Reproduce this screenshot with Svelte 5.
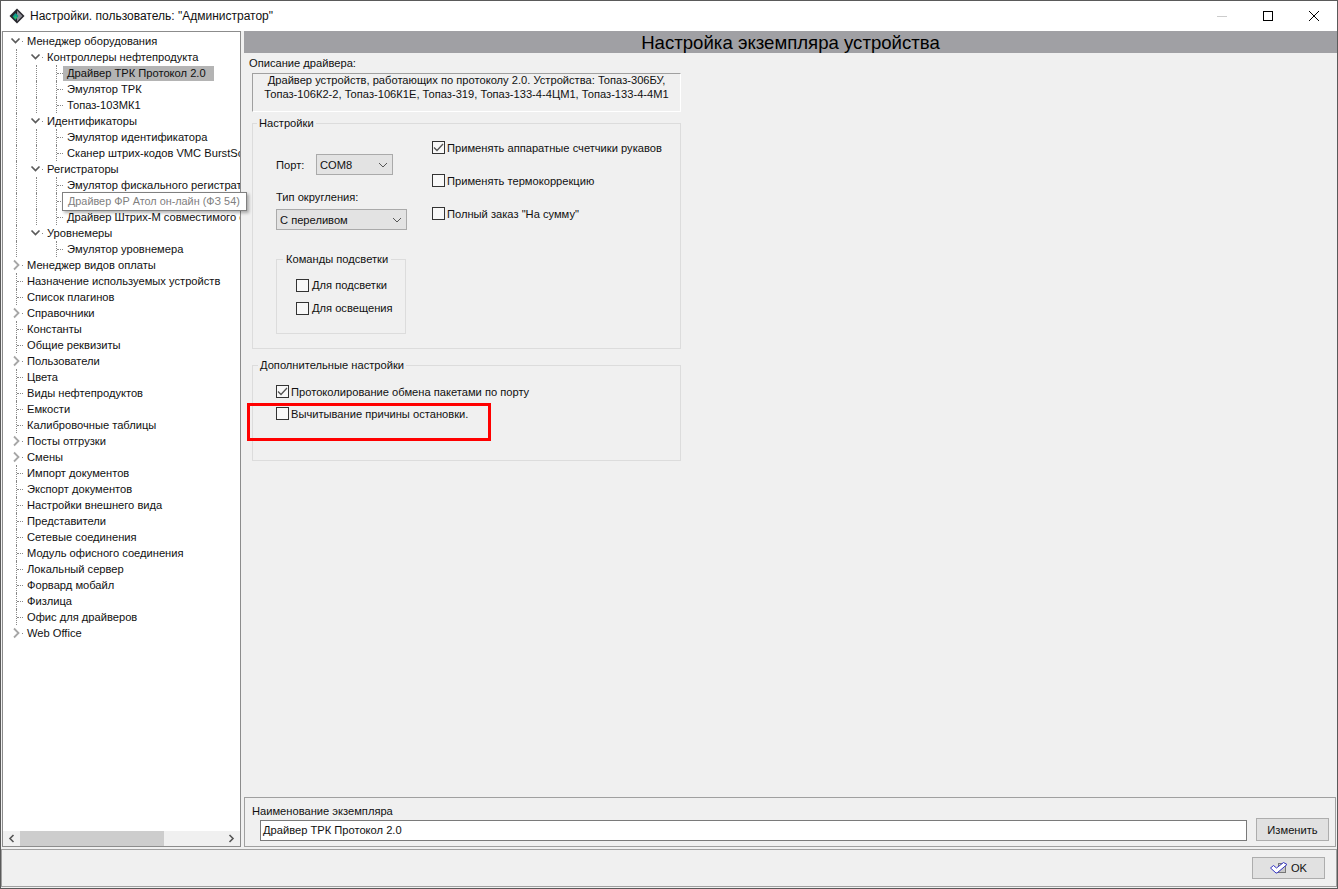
<script>
	const tree = [
		{ t: "Менеджер оборудования", l: 0, open: true, lines: [16] },
		{ t: "Контроллеры нефтепродукта", l: 1, open: true, lines: [16, 36] },
		{ t: "Драйвер ТРК Протокол 2.0", l: 2, sel: true, lines: [16, 36, 56] },
		{ t: "Эмулятор ТРК", l: 2, lines: [16, 36, 56] },
		{ t: "Топаз-103МК1", l: 2, lines: [16, 36, 56] },
		{ t: "Идентификаторы", l: 1, open: true, lines: [16, 36] },
		{ t: "Эмулятор идентификатора", l: 2, lines: [16, 36, 56] },
		{ t: "Сканер штрих-кодов VMC BurstScanner", l: 2, lines: [16, 36, 56] },
		{ t: "Регистраторы", l: 1, open: true, lines: [16, 36] },
		{ t: "Эмулятор фискального регистратора", l: 2, lines: [16, 36, 56] },
		{ t: "Драйвер ФР Атол он-лайн (ФЗ 54)", l: 2, under: true, lines: [16, 36, 56] },
		{ t: "Драйвер Штрих-М совместимого с", l: 2, lines: [16, 36, 56] },
		{ t: "Уровнемеры", l: 1, open: true, lines: [16] },
		{ t: "Эмулятор уровнемера", l: 2, lines: [16, 56] },
		{ t: "Менеджер видов оплаты", l: 0, closed: true, lines: [16] },
		{ t: "Назначение используемых устройств", l: 0, lines: [16] },
		{ t: "Список плагинов", l: 0, lines: [16] },
		{ t: "Справочники", l: 0, closed: true, lines: [16] },
		{ t: "Константы", l: 0, lines: [16] },
		{ t: "Общие реквизиты", l: 0, lines: [16] },
		{ t: "Пользователи", l: 0, closed: true, lines: [16] },
		{ t: "Цвета", l: 0, lines: [16] },
		{ t: "Виды нефтепродуктов", l: 0, lines: [16] },
		{ t: "Емкости", l: 0, lines: [16] },
		{ t: "Калибровочные таблицы", l: 0, lines: [16] },
		{ t: "Посты отгрузки", l: 0, closed: true, lines: [16] },
		{ t: "Смены", l: 0, closed: true, lines: [16] },
		{ t: "Импорт документов", l: 0, lines: [16] },
		{ t: "Экспорт документов", l: 0, lines: [16] },
		{ t: "Настройки внешнего вида", l: 0, lines: [16] },
		{ t: "Представители", l: 0, lines: [16] },
		{ t: "Сетевые соединения", l: 0, lines: [16] },
		{ t: "Модуль офисного соединения", l: 0, lines: [16] },
		{ t: "Локальный сервер", l: 0, lines: [16] },
		{ t: "Форвард мобайл", l: 0, lines: [16] },
		{ t: "Физлица", l: 0, lines: [16] },
		{ t: "Офис для драйверов", l: 0, lines: [16] },
		{ t: "Web Office", l: 0, closed: true, lines: [16], end: true }
	]
</script>

<div class="window">
	<div class="titlebar">
		<svg class="appicon" width="16" height="16" viewBox="0 0 16 16">
			<path d="M8 .5 15.5 8 8 15.5 .5 8Z" fill="#26262c" />
			<path d="M8 2.5 13.5 8 8 13.5Z" fill="#8d8d95" />
			<path d="M6.5 5 9.5 8 6.5 12 3.5 8.5Z" fill="#0f9c8c" />
			<path d="M6.5 8 8 9.5 6.5 11 5 9.5Z" fill="#35c15a" />
		</svg>
		<span class="title">Настройки. пользователь: "Администратор"</span>
		<div class="controls">
			<svg width="46" height="30" viewBox="0 0 46 30"><path d="M18 15.5H28" stroke="#ccc" fill="none" /></svg>
			<svg width="46" height="30" viewBox="0 0 46 30"><rect x="18.5" y="10.5" width="9" height="9" stroke="#000" fill="none" /></svg>
			<svg width="46" height="30" viewBox="0 0 46 30"><path d="M18 10 28 20M28 10 18 20" stroke="#000" fill="none" /></svg>
		</div>
	</div>

	<div class="main">
		<div class="treepanel">
			<div class="tree">
				{#each tree as n}
					<div class="row" class:end={n.end}>
						{#each n.lines as x}
							<i class="vline" style="left:{x - 3}px"></i>
						{/each}
						<i class="hline" style="left:{n.l * 20 + 14}px"></i>
						{#if n.open}
							<svg class="exp" style="left:{n.l * 20 + 7}px" width="11" height="16" viewBox="0 0 11 16"><path d="M1.5 5.5 5.5 9.5 9.5 5.5" stroke="#5a5a5a" stroke-width="1.7" fill="none" /></svg>
						{:else if n.closed}
							<svg class="exp" style="left:{n.l * 20 + 7}px" width="11" height="16" viewBox="0 0 11 16"><path d="M4 3.5 8.5 8 4 12.5" stroke="#a6a6a6" stroke-width="1.8" fill="none" /></svg>
						{/if}
						<span class="label" class:sel={n.sel} class:under={n.under} style="margin-left:{n.l * 20 + 20}px">{n.t}</span>
					</div>
				{/each}
			</div>
			<div class="hscroll">
				<svg width="17" height="15" viewBox="0 0 17 15"><path d="M10.5 4 7 7.5 10.5 11" stroke="#555" stroke-width="1.6" fill="none" /></svg>
				<div class="track"><div class="thumb"></div></div>
				<svg width="17" height="15" viewBox="0 0 17 15"><path d="M6.5 4 10 7.5 6.5 11" stroke="#555" stroke-width="1.6" fill="none" /></svg>
			</div>
		</div>

		<div class="content">
			<div class="heading">Настройка экземпляра устройства</div>
			<div class="form">
				<div class="desclabel">Описание драйвера:</div>
				<div class="desc"><div class="desctext">Драйвер устройств, работающих по протоколу 2.0. Устройства: Топаз-306БУ,<br />Топаз-106К2-2, Топаз-106К1Е, Топаз-319, Топаз-133-4-4ЦМ1, Топаз-133-4-4М1</div></div>

				<fieldset class="settings">
					<legend>Настройки</legend>
					<div class="leftcol">
						<div class="portrow">
							<span class="portlabel">Порт:</span>
							<div class="combo port">COM8<svg width="10" height="6" viewBox="0 0 10 6"><path d="M1 1 5 5 9 1" stroke="#555" fill="none" /></svg></div>
						</div>
						<div class="roundlabel">Тип округления:</div>
						<div class="combo round">С переливом<svg width="10" height="6" viewBox="0 0 10 6"><path d="M1 1 5 5 9 1" stroke="#555" fill="none" /></svg></div>
						<fieldset class="commands">
							<legend>Команды подсветки</legend>
							<label class="check"><span class="box"></span>Для подсветки</label>
							<label class="check"><span class="box"></span>Для освещения</label>
						</fieldset>
					</div>
					<div class="rightcol">
						<label class="check"><span class="box"><svg width="11" height="11" viewBox="0 0 11 11"><path d="M1 5.5 4 8.5 10 2" stroke="#555" stroke-width="1.3" fill="none" /></svg></span>Применять аппаратные счетчики рукавов</label>
						<label class="check"><span class="box"></span>Применять термокоррекцию</label>
						<label class="check"><span class="box"></span>Полный заказ "На сумму"</label>
					</div>
				</fieldset>

				<fieldset class="extra">
					<legend>Дополнительные настройки</legend>
					<label class="check"><span class="box"><svg width="11" height="11" viewBox="0 0 11 11"><path d="M1 5.5 4 8.5 10 2" stroke="#555" stroke-width="1.3" fill="none" /></svg></span>Протоколирование обмена пакетами по порту</label>
					<label class="check"><span class="box"></span>Вычитывание причины остановки.</label>
				</fieldset>
			</div>

			<div class="namebox">
				<div class="namelabel">Наименование экземпляра</div>
				<div class="namerow">
					<div class="nameinput">Драйвер ТРК Протокол 2.0</div>
					<div class="btn change">Изменить</div>
				</div>
			</div>
		</div>
	</div>

	<div class="footer">
		<div class="btn ok">
			<svg width="18" height="12" viewBox="0 0 18 12">
				<rect x="8.5" y="1.5" width="7" height="9" fill="#c8c8c8" stroke="#777" />
				<path d="M.5 6 3.5 3.5 6.5 6 13.5 .5 17 2.5 7 11 6 11Z" fill="#fff" stroke="#3434c4" />
			</svg>
			OK
		</div>
	</div>

	<div class="tooltip">Драйвер ФР Атол он-лайн (ФЗ 54)</div>
	<div class="redmark"></div>
</div>

<style>
	:global(body) {
		background: #f0f0f0;
	}
	.window {
		position: relative;
		box-sizing: border-box;
		width: 1338px;
		height: 889px;
		display: flex;
		flex-direction: column;
		background: #f0f0f0;
		border: 1px solid #5a5a5a;
		font: 11.15px "Liberation Sans", Arial, sans-serif;
		color: #111;
		overflow: hidden;
	}
	.titlebar {
		flex: none;
		height: 30px;
		display: flex;
		align-items: center;
		background: #fff;
		font-size: 12px;
	}
	.appicon {
		margin-left: 8px;
		margin-right: 5px;
	}
	.controls {
		margin-left: auto;
		display: flex;
	}
	.main {
		flex: none;
		height: 816px;
		display: flex;
	}
	.treepanel {
		box-sizing: border-box;
		width: 239px;
		margin-left: 1px;
		display: flex;
		flex-direction: column;
		background: #fff;
		border: 1px solid #8c8c8c;
	}
	.tree {
		flex: 1;
		overflow: hidden;
		padding-top: 1px;
	}
	.row {
		position: relative;
		height: 16px;
		line-height: 16px;
		white-space: nowrap;
	}
	.vline {
		position: absolute;
		top: 0;
		bottom: 0;
		border-left: 1px dotted #888;
	}
	.row:first-child .vline:first-child {
		top: 8px;
	}
	.row.end .vline {
		bottom: 8px;
	}
	.hline {
		position: absolute;
		top: 8px;
		width: 6px;
		border-top: 1px dotted #888;
	}
	.exp {
		position: absolute;
		top: 0;
		background: #fff;
	}
	.label {
		position: relative;
		display: inline-block;
		padding: 0 4px;
		background: #fff;
	}
	.label.sel {
		padding-right: 8px;
		background: linear-gradient(#fff 1px, #b4b4b4 1px);
	}
	.label.under {
		visibility: hidden;
	}
	.hscroll {
		flex: none;
		height: 15px;
		display: flex;
		background: #f0f0f0;
	}
	.track {
		flex: 1;
	}
	.thumb {
		width: 144px;
		height: 15px;
		background: #cdcdcd;
	}
	.content {
		flex: 1;
		display: flex;
		flex-direction: column;
		margin-left: 3px;
		min-width: 0;
	}
	.heading {
		flex: none;
		height: 22px;
		line-height: 23px;
		background: #a0a0a4;
		text-align: center;
		font-size: 18.6px;
		color: #000;
	}
	.form {
		flex: 1;
		width: 429px;
		padding-left: 8px;
	}
	.desclabel {
		margin: 3px 0 3px -3px;
		line-height: 14px;
	}
	.desc {
		box-sizing: border-box;
		height: 39px;
		line-height: 14px;
		text-align: center;
		border: 1px solid;
		border-color: #a0a0a0 #fff #fff #a0a0a0;
	}
	.desctext {
		margin-top: -1px;
	}
	fieldset {
		margin: 0;
		border: 1px solid #dcdcdc;
	}
	legend {
		padding: 0 2px;
		line-height: 14px;
	}
	.settings {
		box-sizing: border-box;
		height: 233px;
		margin-top: 4px;
		padding: 0;
		display: flex;
	}
	.settings > legend {
		margin-left: 4px;
	}
	.leftcol {
		width: 156px;
		margin-left: 23px;
		flex: none;
	}
	.portrow {
		display: flex;
		align-items: center;
		margin-top: 24px;
	}
	.portlabel {
		width: 40px;
	}
	.combo {
		box-sizing: border-box;
		display: flex;
		align-items: center;
		justify-content: space-between;
		height: 21px;
		padding: 0 4px 0 3px;
		background: #e3e3e3;
		border: 1px solid #aaa;
	}
	.port {
		width: 77px;
	}
	.roundlabel {
		margin-top: 15px;
		line-height: 14px;
	}
	.round {
		width: 131px;
		margin-top: 5px;
	}
	.commands {
		box-sizing: border-box;
		width: 130px;
		height: 82px;
		margin-top: 22px;
		padding: 0 0 0 19px;
	}
	.commands > legend {
		margin-left: -13px;
		padding: 0 3px;
	}
	.commands .check {
		margin-top: 5px;
		height: 18px;
		margin-bottom: 5px;
	}
	.commands .check:first-of-type {
		margin-top: 10px;
	}
	.commands .box {
		margin-right: 3px;
	}
	.rightcol {
		margin-top: 11px;
		display: flex;
		flex-direction: column;
		gap: 20px;
	}
	.check {
		display: flex;
		align-items: center;
		height: 13px;
		white-space: nowrap;
	}
	.box {
		box-sizing: border-box;
		flex: none;
		display: flex;
		align-items: center;
		justify-content: center;
		width: 13px;
		height: 13px;
		margin-right: 2px;
		background: #f8f8f8;
		border: 1px solid #333;
	}
	.extra {
		box-sizing: border-box;
		height: 103px;
		margin-top: 9px;
		padding: 13px 0 0 23px;
	}
	.extra > legend {
		margin-left: -18px;
	}
	.extra .check {
		margin-bottom: 9px;
	}
	.namebox {
		flex: none;
		box-sizing: border-box;
		height: 50px;
		margin: 0 1px 0 0;
		padding: 6px 6px 0 7px;
		border: 1px solid #a0a0a0;
	}
	.namelabel {
		line-height: 14px;
	}
	.namerow {
		display: flex;
		align-items: flex-start;
		padding-left: 8px;
	}
	.nameinput {
		box-sizing: border-box;
		flex: 1;
		height: 21px;
		line-height: 19px;
		padding-left: 2px;
		background: #fff;
		border: 1px solid #7a7a7a;
		margin-top: 2px;
	}
	.btn {
		box-sizing: border-box;
		display: flex;
		align-items: center;
		justify-content: center;
		background: #e1e1e1;
		border: 1px solid #adadad;
	}
	.change {
		width: 73px;
		height: 23px;
		margin-left: 9px;
	}
	.footer {
		flex: none;
		box-sizing: border-box;
		height: 38px;
		margin: 2px 0 0 0;
		display: flex;
		justify-content: flex-end;
		align-items: center;
		padding-right: 11px;
		border: 1px solid #a0a0a0;
	}
	.ok {
		width: 73px;
		height: 22px;
		gap: 3px;
	}
	.tooltip {
		position: absolute;
		left: 61px;
		top: 191px;
		box-sizing: border-box;
		width: 185px;
		height: 19px;
		padding-left: 5px;
		line-height: 17px;
		font-size: 10.85px;
		background: #fff;
		color: #808080;
		border: 1px solid #808080;
		box-shadow: 2px 2px 3px rgba(0, 0, 0, 0.3);
	}
	.redmark {
		position: absolute;
		left: 246px;
		top: 402px;
		box-sizing: border-box;
		width: 244px;
		height: 38px;
		border: 3px solid #f00;
	}
</style>
